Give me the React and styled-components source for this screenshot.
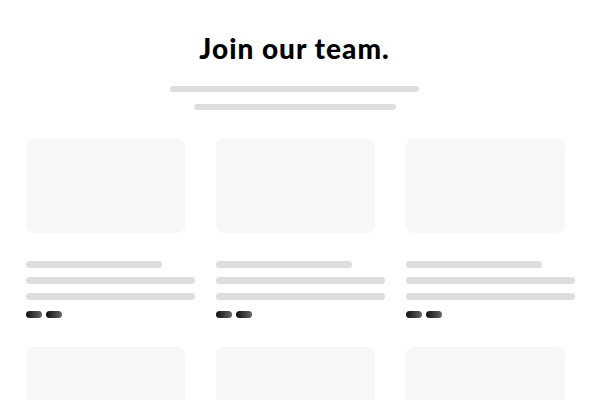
import React from 'react';
import styled, { createGlobalStyle } from 'styled-components';

const GlobalStyle = createGlobalStyle`
  body {
    margin: 0;
    background: #fff;
    font-family: 'Lato', 'Liberation Sans', sans-serif;
  }
`;

const Page = styled.div`
  width: 600px;
  height: 400px;
  overflow: hidden;
  padding: 0 26px;
  box-sizing: border-box;
`;

const Header = styled.header`
  display: flex;
  flex-direction: column;
  align-items: center;
  padding-top: 30px;
  margin-right: 11px;
`;

const Title = styled.h1`
  margin: 0;
  font-size: 28px;
  line-height: 36px;
  font-weight: 900;
  color: #000;
  letter-spacing: 1px;
`;

const Bar = styled.div`
  height: ${(p) => p.h || 6}px;
  width: ${(p) => p.w}px;
  border-radius: 4px;
  background: #dedede;
  margin-top: ${(p) => p.mt || 0}px;
`;

const Grid = styled.div`
  display: grid;
  grid-template-columns: repeat(3, 169px);
  column-gap: 21px;
  row-gap: 29px;
  margin-top: 28px;
`;

const Card = styled.div`
  display: flex;
  flex-direction: column;
`;

const Thumb = styled.div`
  width: 159px;
  height: 95px;
  border-radius: 8px;
  background: #f7f7f7;
  margin-bottom: 28px;
`;

const Tags = styled.div`
  display: flex;
  gap: 4px;
  margin-top: 11px;
`;

const Tag = styled.span`
  width: 16px;
  height: 7px;
  border-radius: 4px;
  background: linear-gradient(90deg, #111 0%, #666 100%);
`;

const CardSkeleton = () => (
  <Card>
    <Thumb />
    <Bar w={136} h={7} />
    <Bar w={169} h={7} mt={9} />
    <Bar w={169} h={7} mt={9} />
    <Tags>
      <Tag />
      <Tag />
    </Tags>
  </Card>
);

export default function App() {
  return (
    <Page>
      <GlobalStyle />
      <Header>
        <Title>Join our team.</Title>
        <Bar w={249} mt={20} />
        <Bar w={202} mt={12} />
      </Header>
      <Grid>
        {Array.from({ length: 6 }).map((_, i) => (
          <CardSkeleton key={i} />
        ))}
      </Grid>
    </Page>
  );
}
